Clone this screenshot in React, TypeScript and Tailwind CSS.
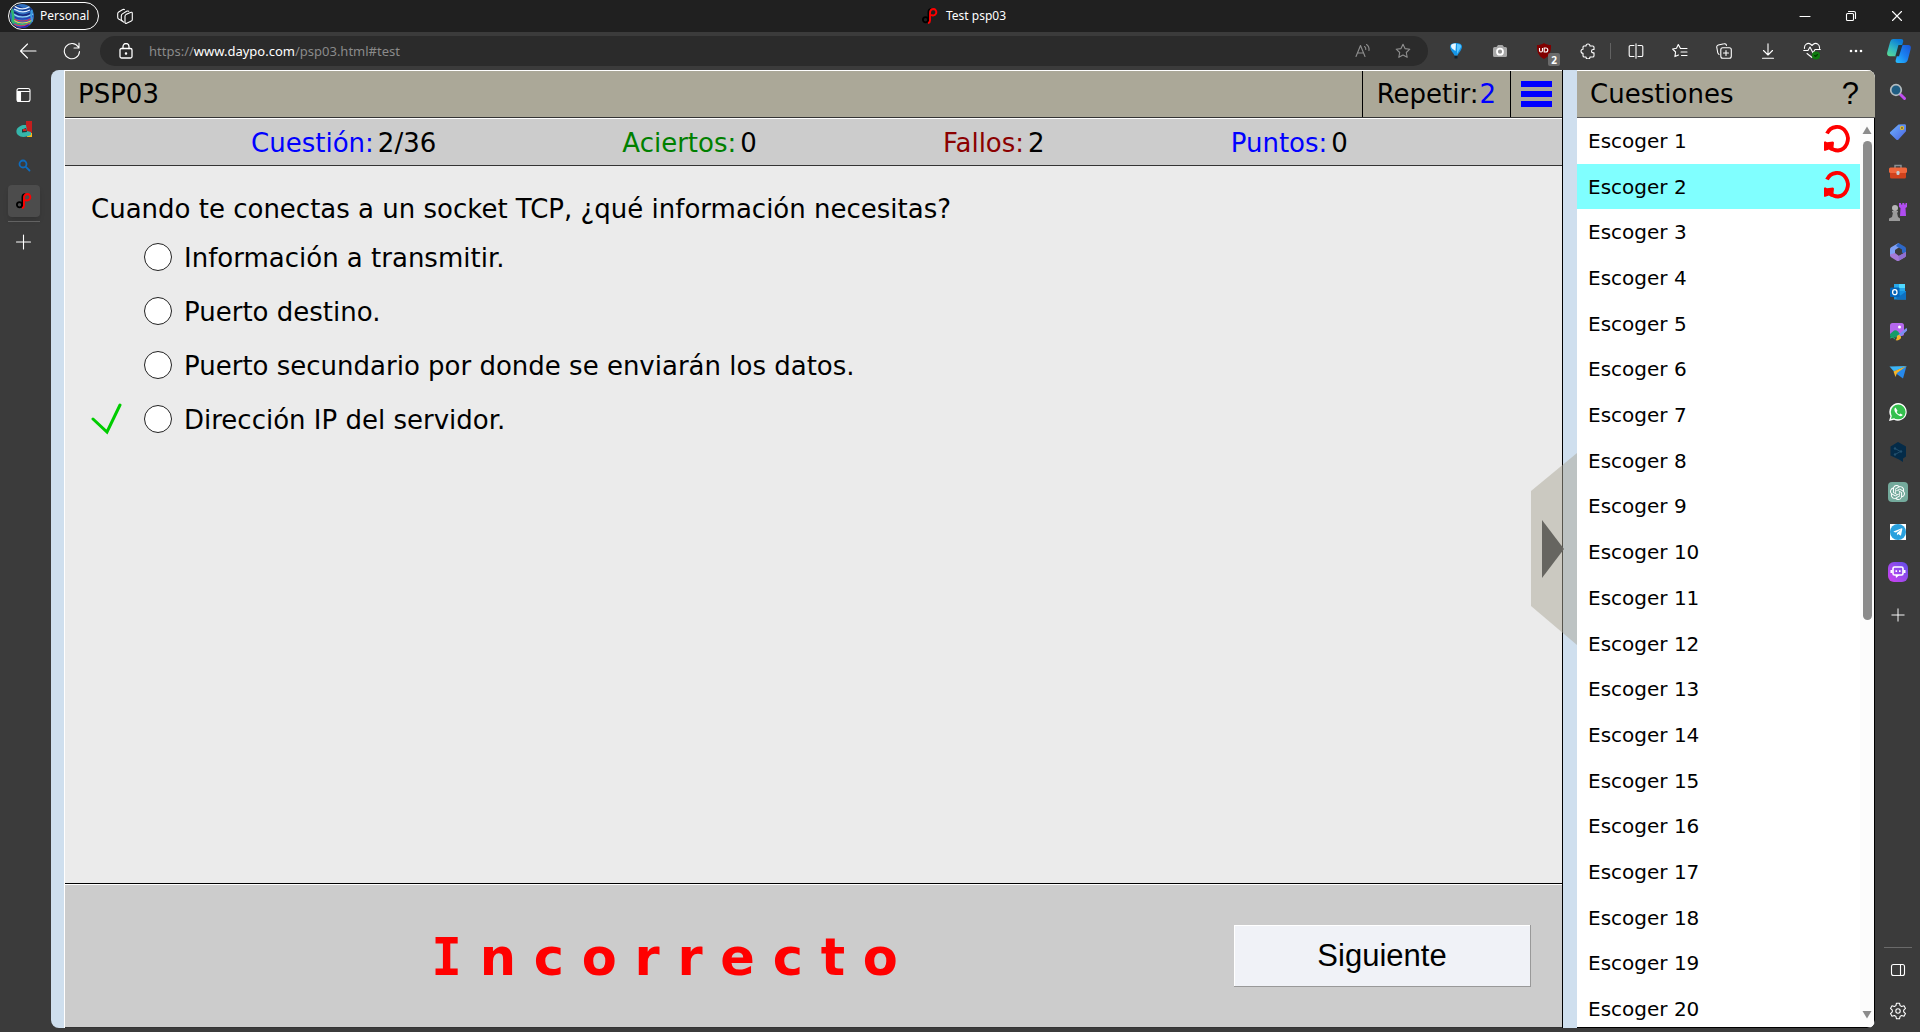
import React, { useState } from "react";
import { FaTelegramPlane } from "react-icons/fa";
import { SiOpenai } from "react-icons/si";

type IconProps = { size?: number; className?: string; children?: React.ReactNode; box?: string };

function Line({ size = 16, className = "", children, box = "0 0 16 16" }: IconProps) {
  return (
    <svg
      width={size}
      height={size}
      viewBox={box}
      fill="none"
      stroke="currentColor"
      strokeWidth="1.1"
      strokeLinecap="round"
      strokeLinejoin="round"
      className={className}
      aria-hidden="true"
    >
      {children}
    </svg>
  );
}

function DaypoLogo({ size = 16 }: { size?: number }) {
  return (
    <svg width={size} height={size} viewBox="0 0 16 16" fill="none" aria-hidden="true">
      <circle cx="3.500" cy="11.800" r="2.600" stroke="#000" strokeWidth="1.800" />
      <path d="M6.300 15V4.200C6.300 2 7.600 1 9.400 1" stroke="#000" strokeWidth="1.600" />
      <path d="M6 15.200C7.600 14.800 8 14 8 12.600V5.200C8 2.400 9.600 1 11.900 1A3.300 3.300 0 1 1 9 6.800" stroke="#f00" strokeWidth="1.900" />
    </svg>
  );
}

function Avatar() {
  return (
    <svg width="24" height="24" viewBox="0 0 24 24" fill="none" aria-hidden="true">
      <defs>
        <clipPath id="avatar">
          <circle cx="12" cy="12" r="12" />
        </clipPath>
      </defs>
      <g clipPath="url(#avatar)" strokeWidth="1.2">
        <rect width="24" height="24" fill="#2f6fc0" />
        <path d="M0 6q6-5 12-1t12-2" stroke="#123a94" strokeWidth="3" />
        <path d="M3 1q8 7 18 1" stroke="#e8f2ff" />
        <path d="M4 5q8 5 16 1" stroke="#d8ecff" />
        <path d="M4 8q8 6 17 1" stroke="#18267c" strokeWidth="1.600" />
        <path d="M3 10q9 6 20 0" stroke="#9fd7f5" />
        <path d="M2 12q10 6 21 0" stroke="#2a38b0" />
        <path d="M2 14q10 6 21 0" stroke="#d03060" />
        <path d="M3 16q9 6 20 0" stroke="#e8d44a" />
        <path d="M4 18q8 5 17 0" stroke="#38c060" />
        <path d="M4 20q8 4 16-1" stroke="#d04060" />
        <path d="M5 23q7 2 14-2" stroke="#3020b0" strokeWidth="2" />
        <path d="M1 4q4 8 1 16" stroke="#30b870" strokeWidth="2.500" />
        <path d="M22 6q-2 6 1 12" stroke="#3a9be0" strokeWidth="2" />
      </g>
    </svg>
  );
}

function TitleBar() {
  return (
    <header className="flex h-8 shrink-0 items-center bg-[#202020] text-white">
      <div className="flex flex-1 items-center pl-2">
        <button className="flex h-7 w-[91px] items-center gap-[6px] rounded-full border border-white pl-px text-[12px]">
          <Avatar />
          Personal
        </button>
        <button aria-label="Áreas de trabajo" className="ml-[18px]">
          <Line>
            <path d="M5 12.7 2 11.300C.9 10.800.7 10.300.7 9.300V5.700c0-.9.3-1.400 1-1.800L5.400 1.700c.7-.4 1.300-.5 2-.1" />
            <path d="M7 14.200c-1.700-.7-2.700-1.100-2.700-2.600V8c0-1 .3-1.600 1.100-2.100l4.200-2.600c.8-.4 1.500-.4 2.200 0" />
            <path d="M8 8.200c0-.8.3-1.200.9-1.600l4.600-2.200c1-.5 1.800 0 1.800 1v6c0 .8-.3 1.400-1 1.700l-4.600 2.100c-1 .5-1.700 0-1.700-1z" />
          </Line>
        </button>
      </div>
      <div className="flex items-center gap-2 text-[12px]">
        <DaypoLogo />
        Test psp03
      </div>
      <div className="flex flex-1 justify-end">
        <button aria-label="Minimizar" className="flex w-[46px] justify-center">
          <Line size={12} box="0 0 12 12"><path d="M1 6.500h10" /></Line>
        </button>
        <button aria-label="Restaurar" className="flex w-[46px] justify-center">
          <Line size={12} box="0 0 12 12">
            <rect x="1.500" y="3.500" width="7" height="7" rx="1" />
            <path d="M3.500 1.500H9a1.500 1.500 0 0 1 1.500 1.500v5.500" />
          </Line>
        </button>
        <button aria-label="Cerrar" className="flex w-[46px] justify-center">
          <Line size={12} box="0 0 12 12"><path d="m1.500 1.500 9 9m0-9-9 9" /></Line>
        </button>
      </div>
    </header>
  );
}

function ToolButton({ label, children }: { label: string; children: React.ReactNode }) {
  return (
    <button aria-label={label} className="flex h-full w-11 shrink-0 items-center justify-center text-white">
      {children}
    </button>
  );
}

function CopilotIcon() {
  return (
    <svg width="24" height="24" viewBox="0 0 24 24" aria-hidden="true">
      <defs>
        <linearGradient id="cpa" x1="0" y1="1" x2=".6" y2="0">
          <stop offset="0" stopColor="#5fe08c" />
          <stop offset=".5" stopColor="#2fb6c4" />
          <stop offset="1" stopColor="#0a7ad8" />
        </linearGradient>
        <linearGradient id="cpb" x1="0" y1="1" x2="1" y2="0">
          <stop offset="0" stopColor="#27c0ff" />
          <stop offset=".5" stopColor="#1a80f0" />
          <stop offset="1" stopColor="#1c54d4" />
        </linearGradient>
      </defs>
      <path d="M6.500 0h7.500c2 0 2.600 1.500 2 3.300L12.600 14c-.7 2.300-2 3.300-4.200 3.300H3c-2.500 0-3.400-1.700-2.700-4.200L3 3.300C3.600 1.200 4.600 0 6.500 0z" fill="url(#cpa)" />
      <path d="M15.500 6h5.700c2.300 0 3.100 1.600 2.500 4l-2.800 10.500c-.6 2.300-1.800 3.500-4 3.500h-6c-2 0-2.700-1.300-2.100-3.200L12 9.500C12.800 7 13.500 6 15.500 6z" fill="url(#cpb)" />
      <path d="M11.500 6h4L12 17.300H8.300z" fill="#24343a" />
    </svg>
  );
}

function Toolbar() {
  return (
    <nav className="flex h-[38px] shrink-0 items-center bg-[#3b3b3b]" aria-label="Navegación">
      <button aria-label="Atrás" className="flex w-14 justify-center text-white">
        <Line size={18} box="0 0 18 18"><path d="M17 9H1.500m7-7-7 7 7 7" /></Line>
      </button>
      <button aria-label="Actualizar" className="flex w-8 justify-center text-white">
        <Line size={18} box="0 0 18 18"><path d="M16.500 9.500A7.600 7.600 0 1 1 15.300 5M16 1v5h-5" /></Line>
      </button>
      <div className="ml-3 flex h-[30px] min-w-0 flex-1 items-center rounded-full bg-[#2b2b2b] pl-[18px]">
        <Line className="shrink-0 text-white" size={16}>
          <rect x="2" y="5.500" width="12" height="9.500" rx="1.500" strokeWidth="1.300" />
          <path d="M5 5.500V3.500a3 3 0 0 1 6 0v2" strokeWidth="1.300" />
          <circle cx="8" cy="10.500" r=".7" fill="currentColor" />
        </Line>
        <div className="ml-[15px] flex-1 text-[13px] leading-5 text-[#8a8a8a]">
          https://<span className="text-white">www.daypo.com</span>/psp03.html#test
        </div>
        <button aria-label="Leer en voz alta" className="flex w-10 justify-center text-[#8f8f8f]">
          <Line><path d="M1 13.500 5.500 2.500 10 13.500M2.500 10h6M9.500 3.500q1.500 1 1.300 3M11.500 1.500q3 2 2.500 6" /></Line>
        </button>
        <button aria-label="Agregar a favoritos" className="mr-[5px] flex w-10 justify-center text-[#8f8f8f]">
          <Line><path d="m8 1.300 2 4.300 4.800.6-3.500 3.300.9 4.800L8 12l-4.200 2.300.9-4.800L1.200 6.200 6 5.600z" /></Line>
        </button>
      </div>
      <div className="ml-[6px] flex h-full items-center">
        <ToolButton label="Extensión globo">
          <svg width="16" height="18" viewBox="0 0 16 18" aria-hidden="true">
            <path d="M2 4.500C2 2 5 1 8 1s6 1 6 3.500C14 8 10.500 11 9.500 13.500h-3C5.500 11 2 8 2 4.500z" fill="#1596e8" />
            <path d="M3 4c0-2 2.500-2.500 5-2.500L7.500 9C5 7.500 3 6 3 4z" fill="#e5f7ff" />
            <path d="M9 2c3 0 4.500 1 4 3l-4 7z" fill="#5cc6ff" />
            <path d="M6.500 14h3v2.500h-3z" fill="#10202c" />
          </svg>
        </ToolButton>
        <ToolButton label="Extensión de captura">
          <svg width="16" height="16" viewBox="0 0 16 16" aria-hidden="true">
            <path d="M2.500 4h2L6 2h4.500L12 4h1.500A1.500 1.500 0 0 1 15 5.500v7a1.500 1.500 0 0 1-1.500 1.500h-11A1.500 1.500 0 0 1 1 12.500v-7A1.500 1.500 0 0 1 2.500 4z" fill="#a8a8a8" />
            <circle cx="8" cy="8.700" r="3" fill="#909090" stroke="#fff" strokeWidth="1.800" />
          </svg>
        </ToolButton>
        <ToolButton label="Bloqueador de anuncios">
          <span className="relative">
            <svg width="16" height="16" viewBox="0 0 16 16" aria-hidden="true">
              <path d="M8 0c2 1.500 4.500 2 7 2 .3 6-1 11-7 14C2 13 .7 8 1 2c2.500 0 5-.5 7-2z" fill="#800000" />
              <path d="M3.500 5v2.500a1.500 1.500 0 0 0 3 0V5M8.200 5v4h1.600a2 2 0 0 0 0-4z" fill="none" stroke="#fff" strokeWidth="1.100" />
            </svg>
            <span className="absolute -right-2 top-[10px] flex h-[13px] w-3 items-center justify-center rounded-[2px] bg-[#6b6b6b] text-[10px] font-bold leading-3">2</span>
          </span>
        </ToolButton>
        <ToolButton label="Extensiones">
          <Line><path d="M4 3h2a2 2 0 0 1 4 0h2.700A1.300 1.300 0 0 1 14 4.300V6.500h-.8a1.700 1.700 0 0 0 0 3.400h.8v2.800a1.300 1.300 0 0 1-1.300 1.300H10a2 2 0 0 1-4 0H4.300A1.300 1.300 0 0 1 3 12.700v-2.500a2 2 0 0 1 0-4V4.300A1.300 1.300 0 0 1 4 3z" /></Line>
        </ToolButton>
        <div className="mr-[3px] h-4 w-px bg-[#626262]" />
        <ToolButton label="Pantalla dividida">
          <Line><path d="M6 2.500H2.500A1.300 1.300 0 0 0 1.200 3.800v8.400a1.300 1.300 0 0 0 1.300 1.300H6M8 .7v14.600M10 2.500h3.500a1.300 1.300 0 0 1 1.300 1.300v8.400a1.300 1.300 0 0 1-1.300 1.300H10" /></Line>
        </ToolButton>
        <ToolButton label="Favoritos">
          <Line><path d="M8.500 5.500 6.300 1.500 4.500 5.300.6 6l3 3-.7 4.600L6.500 12M8.500 5.500H15M9 9h6M9.500 12.500H15" /></Line>
        </ToolButton>
        <ToolButton label="Colecciones">
          <Line>
            <rect x="4.800" y="4.800" width="10.500" height="10.500" rx="2" />
            <path d="M10 7.500v5M7.500 10h5M3 11.500 1.800 10 .8 4.500A2 2 0 0 1 2.300 2L8 .8A2 2 0 0 1 10.500 2.500" />
          </Line>
        </ToolButton>
        <ToolButton label="Descargas">
          <Line><path d="M8 .7V12M3.500 7.500 8 12l4.500-4.500M2.500 15.200h11" /></Line>
        </ToolButton>
        <ToolButton label="Rendimiento">
          <svg width="18" height="18" viewBox="0 0 18 18" fill="none" stroke="#fff" strokeWidth="1.100" strokeLinecap="round" strokeLinejoin="round" aria-hidden="true">
            <path d="M1.500 6.500C1 3 4.500-.3 8 2.500L9 3.500l1-1c3.500-2.800 7 .5 6.500 4M.7 8.500H5L7 5l3 6 2-3.500h5.300M4 11.500l5 4" />
            <circle cx="13" cy="13.500" r="3.500" fill="#0f7b0f" stroke="#0f7b0f" />
            <path d="m11.500 13.500 1 1 2-2" stroke="#063d06" />
          </svg>
        </ToolButton>
        <ToolButton label="Más opciones">
          <svg width="14" height="4" viewBox="0 0 14 4" fill="#fff" aria-hidden="true">
            <circle cx="2" cy="2" r="1.300" /><circle cx="7" cy="2" r="1.300" /><circle cx="12" cy="2" r="1.300" />
          </svg>
        </ToolButton>
        <button aria-label="Copilot" className="flex h-full w-[42px] items-center justify-center">
          <CopilotIcon />
        </button>
      </div>
    </nav>
  );
}

function TabRail() {
  return (
    <aside className="flex w-[51px] shrink-0 flex-col items-start pl-2 text-white" aria-label="Pestañas">
      <div className="flex w-8 flex-col items-center">
        <button aria-label="Menú de pestañas" className="mt-[17px]">
          <Line>
            <rect x="1" y="1.500" width="13" height="13" rx="2" />
            <path d="M1.500 4.500h12" />
            <path d="M1.500 4.500h3V14h-3z" fill="currentColor" />
          </Line>
        </button>
        <button aria-label="Pestaña 1" className="mt-[18px]">
          <svg width="16" height="16" viewBox="0 0 16 16" aria-hidden="true">
            <path d="M10 0h6v12h-6z" fill="#c41e1e" />
            <path d="M11 12h5v4h-5z" fill="#f5b81c" />
            <path d="M7 4h3l1 6 4 1v3c-4 2-10 3-13 0-3-3-2-8 5-10z" fill="#35b5aa" />
            <path d="M6 8.500 10 7l1 4-5 .5z" fill="#2a2f33" />
            <path d="M7 8h3v2H7z" fill="#d02020" />
          </svg>
        </button>
        <button aria-label="Pestaña 2" className="mt-5">
          <Line className="text-[#0f6cbd]"><circle cx="7" cy="7" r="3.500" strokeWidth="1.800" /><path d="m9.800 9.800 3.700 3.700" strokeWidth="1.800" /></Line>
        </button>
        <button aria-label="Test psp03" className="mt-3 flex size-8 items-center justify-center rounded-sm bg-[#4c4c4c] shadow-md">
          <DaypoLogo />
        </button>
        <div className="mt-1 h-px w-8 bg-[#626262]" />
        <button aria-label="Nueva pestaña" className="mt-3">
          <Line><path d="M7.500 1v14M.5 8h14" /></Line>
        </button>
      </div>
    </aside>
  );
}

const apps: { label: string; icon: React.ReactNode }[] = [
  {
    label: "Buscar",
    icon: (
      <svg width="18" height="18" viewBox="0 0 18 18">
        <path d="m11.500 11.500 4 4" stroke="#c04df0" strokeWidth="3" strokeLinecap="round" />
        <circle cx="7" cy="7" r="5.300" fill="#1f5d83" stroke="#b4bcc0" strokeWidth="1.700" />
      </svg>
    ),
  },
  {
    label: "Compras",
    icon: (
      <svg width="18" height="18" viewBox="0 0 18 18">
        <defs><linearGradient id="tag" x1="0" y1="0" x2="1" y2="1"><stop stopColor="#6fb2ff" /><stop offset="1" stopColor="#4a63e0" /></linearGradient></defs>
        <path d="m9.500 1.500 6-.3c1 0 1.500.5 1.500 1.500v5.500L9.500 16.500c-.8.8-1.500.8-2.300 0L1.500 11c-.8-.8-.8-1.500 0-2.300z" fill="url(#tag)" />
        <circle cx="13" cy="5" r="1.500" fill="#555" stroke="#f3c61d" strokeWidth="1.200" />
      </svg>
    ),
  },
  {
    label: "Herramientas",
    icon: (
      <svg width="18" height="18" viewBox="0 0 18 18">
        <path d="M6 5V2.500h6V5" fill="none" stroke="#8b9094" strokeWidth="1.500" />
        <rect x="0" y="4.500" width="18" height="5.500" rx="1.500" fill="#f0673c" />
        <path d="M1 10h16v4a1.500 1.500 0 0 1-1.500 1.500h-13A1.500 1.500 0 0 1 1 14z" fill="#d0421c" />
        <rect x="7.500" y="8" width="3" height="4" rx="1.200" fill="#c3ccd1" />
      </svg>
    ),
  },
  {
    label: "Juegos",
    icon: (
      <svg width="18" height="18" viewBox="0 0 18 18">
        <path d="M10 0h2v1.500h1.300V0h2v1.500h1.200V0H18v4l-1.500 1 .5 8h-6l.5-8L10 4z" fill="#b04df0" />
        <circle cx="6" cy="5" r="3" fill="#b5b5b5" />
        <path d="M3 8h6v1.500H8l1 4.500 2 1.500V18H0v-2.500L3 14l1-4.500H3z" fill="#9a9a9a" />
      </svg>
    ),
  },
  {
    label: "Microsoft 365",
    icon: (
      <svg width="18" height="18" viewBox="0 0 18 18">
        <path d="M9.500 0 2.500 4C1.500 4.600 1 5.500 1 6.500v6.500l5-2.500V7L12 3z" fill="#7fa0f5" />
        <path d="M9.500 0 15.500 3.500C16.500 4 17 5 17 6v5.500l-4-2V6.500L7 3z" fill="#2e68c8" />
        <path d="m1 11.500 5-1.500 4 3 7-4v3c0 1-.5 2-1.500 2.500L10 17.700c-.8.4-1.500.4-2.300 0L2.500 14.500C1.500 14 1 13 1 11.500z" fill="#a57ad8" />
        <path d="m9.500 13 7.500-4v3c0 1-.5 2-1.500 2.500L10 17.500z" fill="#8f6fd0" />
      </svg>
    ),
  },
  {
    label: "Outlook",
    icon: (
      <svg width="18" height="18" viewBox="0 0 18 18">
        <path d="M5 1h11v8H5z" fill="#28a8ea" /><path d="M10 1h6v4h-6z" fill="#50d9ff" />
        <path d="M5 8h12v8.500H5z" fill="#1490df" /><path d="m5 8.500 6.500 4L17 8.500v8H8z" fill="#0f70c0" />
        <rect x="1" y="4.500" width="9.500" height="9.500" rx="1" fill="#0364b8" />
        <ellipse cx="5.800" cy="9.200" rx="2.200" ry="2.500" fill="none" stroke="#fff" strokeWidth="1.300" />
      </svg>
    ),
  },
  {
    label: "Designer",
    icon: (
      <svg width="18" height="18" viewBox="0 0 18 18">
        <rect x="1" y="0" width="14" height="13" rx="2.500" fill="#b568ee" />
        <circle cx="10.500" cy="4" r="1.500" fill="#fff" />
        <path d="M1 11 5 7.500q2-1 4 1l2 2.500-4 3.500H3a2 2 0 0 1-2-2z" fill="#169c68" />
        <path d="M17.500 6.500 10 13" stroke="#7890f0" strokeWidth="2.500" strokeLinecap="round" />
        <path d="M8 13q2-2 3.500 0t-1 3.500-4 .5Q8 16 8 13z" fill="#f5b52a" />
        <path d="M1 15q3-2 5 1" stroke="#25b078" fill="none" />
      </svg>
    ),
  },
  {
    label: "Drop",
    icon: (
      <svg width="18" height="18" viewBox="0 0 18 18">
        <path d="M.5 3.500 17.500 3 5 8.500z" fill="#3cb4f5" />
        <path d="M17.500 3 14 15.500 5 9z" fill="#2689ec" />
        <path d="m4.500 8.500 13-5.500L8 10l-1.500 4z" fill="#f5b52a" />
      </svg>
    ),
  },
  {
    label: "WhatsApp",
    icon: (
      <svg width="18" height="18" viewBox="0 0 18 18">
        <path d="M9.200 0A8.800 8.800 0 1 1 5 16.700L0 18l1.400-4.800A8.900 8.900 0 0 1 9.200 0z" fill="#fff" />
        <circle cx="9.200" cy="8.900" r="7.400" fill="#35c04e" />
        <path d="m2 16 1-4 3 3z" fill="#35c04e" />
        <path d="M6.500 4.500c-2 1.200-1 4.500 1.300 6.600s4.700 3 6 1l-2.300-1.600-1.200 1c-1.300-.7-2-1.400-2.600-2.600l.8-1.200z" fill="#fff" />
      </svg>
    ),
  },
  {
    label: "DeepL",
    icon: (
      <svg width="18" height="20" viewBox="0 0 18 20">
        <path d="m9 0 8 4.500v10L14 16.500V20l-4-2.500-8.500-4v-9z" fill="#042b48" />
        <path d="m6 6.500 5.500 3L6 12.500" fill="none" stroke="#23506e" />
        <circle cx="6" cy="6.500" r="1.200" fill="#23506e" /><circle cx="12" cy="9.500" r="1.200" fill="#23506e" /><circle cx="6" cy="12.500" r="1.200" fill="#23506e" />
      </svg>
    ),
  },
  {
    label: "ChatGPT",
    icon: <span className="flex size-5 items-center justify-center rounded bg-[#74aa9c] text-white"><SiOpenai size={15} /></span>,
  },
  {
    label: "Telegram",
    icon: (
      <span className="flex size-4 items-center justify-center bg-white">
        <span className="flex size-4 items-center justify-center rounded-full bg-[#2aa1de] text-white"><FaTelegramPlane size={10} /></span>
      </span>
    ),
  },
  {
    label: "Chat",
    icon: (
      <span className="flex size-5 items-center justify-center rounded-md bg-linear-to-bl from-[#5b4be8] to-[#d23cf0]">
        <svg width="16" height="14" viewBox="0 0 16 14">
          <rect x="3" y="2" width="10" height="8" rx="1.500" fill="none" stroke="#fff" strokeWidth="1.600" />
          <path d="M.5 5h2v3h-2zM13.500 5h2v3h-2zM5.500 5.200h1.600v1.800H5.500zM9 5.200h1.600v1.800H9zM5.500 10h4L6 13z" fill="#fff" />
        </svg>
      </span>
    ),
  },
];

function AppRail() {
  return (
    <aside className="flex w-[45px] shrink-0 flex-col items-center pt-[2px] text-white" aria-label="Barra lateral">
      {apps.map((a) => (
        <button key={a.label} aria-label={a.label} className="flex h-10 w-full items-center justify-center">
          {a.icon}
        </button>
      ))}
      <button aria-label="Personalizar" className="mt-4">
        <Line size={14}><path d="M8 1v14M1 8h14" /></Line>
      </button>
      <div className="mt-auto h-px w-7 bg-[#6a6a6a]" />
      <button aria-label="Mostrar barra lateral" className="mt-[14px]">
        <Line><rect x="1.500" y="2.500" width="13" height="11" rx="2" /><path d="M10.500 2.500v11" /></Line>
      </button>
      <button aria-label="Configuración" className="mb-3 mt-6">
        <Line size={18} box="0 0 18 18">
          <path d="M7.500 1.200h3l.6 2.400 1.500.9 2.400-.7 1.500 2.600-1.800 1.700v1.800l1.800 1.700-1.500 2.600-2.400-.7-1.500.9-.6 2.400h-3l-.6-2.400-1.500-.9-2.400.7-1.500-2.600 1.800-1.700V8.100L1.500 6.400 3 3.800l2.400.7 1.500-.9z" />
          <circle cx="9" cy="9" r="2.200" />
        </Line>
      </button>
    </aside>
  );
}

function Stat({ label, value, color }: { label: string; value: string; color: string }) {
  return (
    <div className="flex gap-1">
      <span className={color}>{label}</span>
      <span>{value}</span>
    </div>
  );
}

function RetryMark() {
  return (
    <svg width="30" height="30" viewBox="0 0 30 30" fill="none" aria-label="Repetir">
      <path d="M5 9.500A11 11.800 0 1 1 16 26.500Q11 26.500 8 23" stroke="#f00" strokeWidth="3.800" />
      <path d="M2 18l1-.8 2 1 6-.7 1 1-.5 4.500L10 24l1.500 3-3-.5L7 25.500l-4.500 1.500L2 26z" fill="#f00" />
    </svg>
  );
}

const answers = [
  { text: "Información a transmitir.", correct: false },
  { text: "Puerto destino.", correct: false },
  { text: "Puerto secundario por donde se enviarán los datos.", correct: false },
  { text: "Dirección IP del servidor.", correct: true },
];

function Quiz() {
  const [choice, setChoice] = useState<number | null>(null);
  return (
    <main className="relative flex min-w-0 flex-1 flex-col border-l border-r border-l-white border-r-black bg-[#ebebeb] text-[26px] leading-8">
      <div className="flex h-12 shrink-0 border-b border-t border-b-[#333] border-t-white bg-[#aba898]">
        <h1 className="flex flex-1 items-center pl-[13px]">PSP03</h1>
        <div className="flex items-center gap-px border-l border-black px-[14px]">
          Repetir:<span className="text-[#00f]">2</span>
        </div>
        <button aria-label="Menú" className="flex w-[52px] flex-col items-center justify-center gap-1 border-l border-black">
          <span className="h-[6px] w-[31px] bg-[#00f]" />
          <span className="h-[6px] w-[31px] bg-[#00f]" />
          <span className="h-[6px] w-[31px] bg-[#00f]" />
        </button>
      </div>
      <div className="flex h-12 shrink-0 items-center justify-evenly border-b border-t border-b-[#333] border-t-white bg-[#ccc] pr-7 pt-[2px]">
        <Stat label="Cuestión:" value="2/36" color="text-[#00f]" />
        <Stat label="Aciertos:" value="0" color="text-[#008000]" />
        <Stat label="Fallos:" value="2" color="text-[#8b0000]" />
        <Stat label="Puntos:" value="0" color="text-[#00f]" />
      </div>
      <div role="radiogroup" aria-labelledby="pregunta" className="min-h-0 flex-1 px-[26px] pt-[27px]">
        <p id="pregunta">Cuando te conectas a un socket TCP, ¿qué información necesitas?</p>
        <div className="mt-[5px]">
          {answers.map((a, i) => (
            <label key={a.text} className="flex h-[54px] items-center">
              <span className="w-[53px] shrink-0">
                {a.correct && (
                  <svg width="32" height="32" viewBox="0 0 32 32" fill="none" aria-label="Correcta">
                    <path d="m2 16 14 13L29 2" stroke="#0c0" strokeWidth="3" strokeLinecap="round" />
                  </svg>
                )}
              </span>
              <input
                type="radio"
                name="respuesta"
                checked={choice === i}
                onChange={() => setChoice(i)}
                className="size-7 shrink-0 appearance-none rounded-full border border-[#222] bg-white checked:border-8"
              />
              <span className="pl-3 pt-[2px]">{a.text}</span>
            </label>
          ))}
        </div>
      </div>
      <footer className="flex h-[145px] shrink-0 items-center border-b border-t border-b-[#333] border-t-black bg-[#ccc] shadow-[inset_0_1px_0_#fff]">
        <p className="flex-1 pl-[30px] pt-1 text-center text-[51px] font-bold leading-[60px] text-[#f00]">
          <span className="font-['DejaVu_Sans_Mono']">I</span> n c o r r e c t o
        </p>
        <button className="mr-[31px] h-[62px] w-[297px] border-b border-r border-b-[#999] border-r-[#999] bg-[#f0f2f7] pt-[2px] font-['Liberation_Sans',sans-serif] text-[31px] shadow-[inset_1px_1px_0_#fff]">
          Siguiente
        </button>
      </footer>
      <button aria-label="Ocultar cuestiones" className="absolute -right-[15px] top-[383px]">
        <svg width="46" height="192" viewBox="0 0 46 192" aria-hidden="true">
          <path d="M46 0v192L0 153V38z" fill="#aba898" fillOpacity=".5" />
          <path d="m11 67 22 29-22 29z" fill="#666560" />
        </svg>
      </button>
    </main>
  );
}

function QuestionList() {
  return (
    <section className="flex w-[298px] shrink-0 flex-col bg-white" aria-label="Cuestiones">
      <div className="flex h-12 shrink-0 items-center border-b border-t border-b-[#555] border-t-white bg-[#aba898] pl-[13px] pr-4 text-[26px]">
        <h2 className="flex-1">Cuestiones</h2>
        <button aria-label="Ayuda" className="font-['Liberation_Sans',sans-serif] text-[31px] leading-9">?</button>
      </div>
      <div className="flex min-h-0 flex-1 border-b border-r border-black">
        <ul className="grid flex-1 grid-rows-[repeat(19,1fr)_41px] overflow-hidden text-[20px] leading-[46px]">
          {Array.from({ length: 20 }, (_, i) => (
            <li key={i} className={i === 1 ? "min-h-0 bg-[#80ffff]" : "min-h-0"}>
              <button className="flex h-full w-full items-start justify-between pl-[11px] pr-2">
                Escoger {i + 1}
                {i < 2 && <span className="pt-[6px]"><RetryMark /></span>}
              </button>
            </li>
          ))}
        </ul>
        <div className="flex w-[14px] flex-col items-center bg-[#fcfcfc] py-2" aria-hidden="true">
          <svg width="10" height="8" viewBox="0 0 10 8"><path d="M5 .500 9.500 8h-9z" fill="#8b8b8b" /></svg>
          <div className="mt-[7px] w-[9px] flex-1"><div className="h-[55%] rounded-full bg-[#8b8b8b]" /></div>
          <svg width="10" height="8" viewBox="0 0 10 8"><path d="M5 7.500 9.500 0h-9z" fill="#8b8b8b" /></svg>
        </div>
      </div>
    </section>
  );
}

export default function App() {
  return (
    <div className="flex h-screen flex-col overflow-hidden bg-[#3b3b3b] font-['Noto_Sans',sans-serif]">
      <TitleBar />
      <Toolbar />
      <div className="flex min-h-0 flex-1">
        <TabRail />
        <div className="mb-1 flex min-w-0 flex-1 overflow-hidden rounded-lg bg-[#cfdfee] pl-[13px] font-['DejaVu_Sans',sans-serif] text-black">
          <Quiz />
          <div className="w-[14px] shrink-0" />
          <QuestionList />
        </div>
        <AppRail />
      </div>
    </div>
  );
}
